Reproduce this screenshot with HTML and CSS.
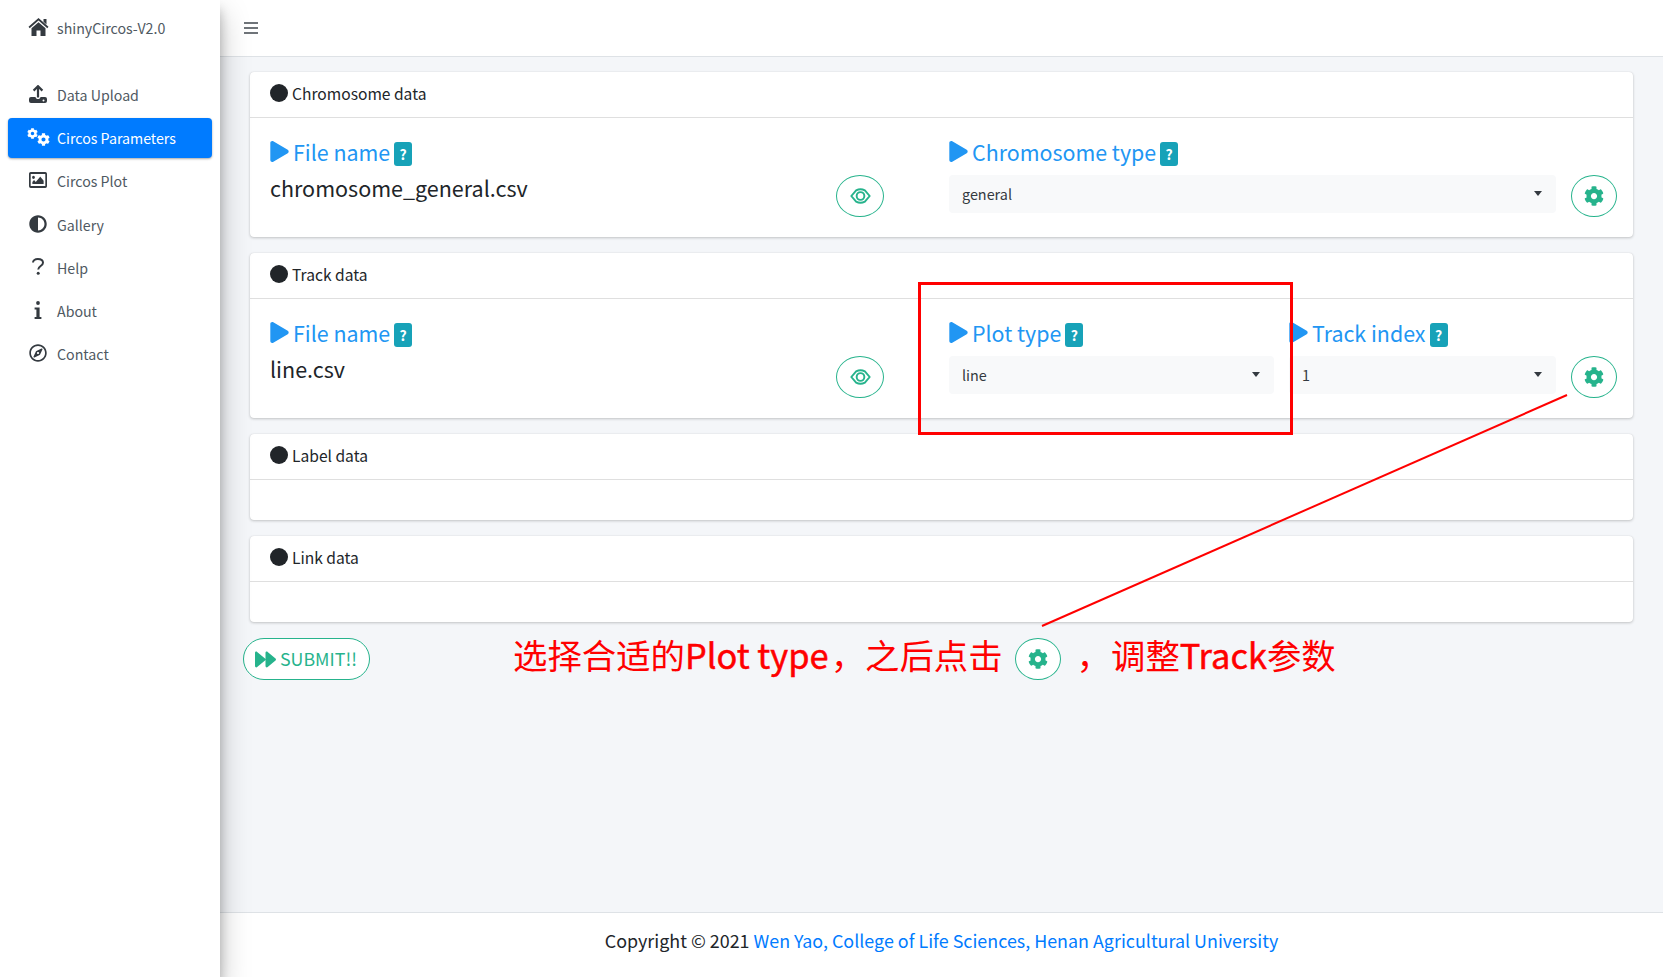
FILE: index.html
```html
<!DOCTYPE html>
<html>
<head>
<meta charset="utf-8">
<title>shinyCircos-V2.0</title>
<link rel="stylesheet" href="styles.css">
</head>
<body>

<!-- shared icons -->
<svg class="defs" aria-hidden="true">
  <symbol id="i-cog" viewBox="0 0 512 512"><path d="M487.4 315.7l-42.6-24.6c4.3-23.2 4.3-47 0-70.2l42.6-24.6c4.9-2.8 7.1-8.6 5.5-14-11.1-35.6-30-67.8-54.7-94.6-3.8-4.1-10-5.1-14.8-2.3L380.8 110c-17.9-15.4-38.5-27.3-60.8-35.1V25.8c0-5.6-3.9-10.5-9.4-11.7-36.7-8.2-74.3-7.8-109.2 0-5.5 1.2-9.4 6.1-9.4 11.7V75c-22.2 7.9-42.8 19.8-60.8 35.1L88.7 85.5c-4.9-2.8-11-1.9-14.8 2.3-24.7 26.7-43.6 58.9-54.7 94.6-1.7 5.4.6 11.2 5.5 14L67.3 221c-4.3 23.2-4.3 47 0 70.2l-42.6 24.6c-4.9 2.8-7.1 8.6-5.5 14 11.1 35.6 30 67.8 54.7 94.6 3.8 4.1 10 5.1 14.8 2.3l42.6-24.6c17.9 15.4 38.5 27.3 60.8 35.1v49.2c0 5.6 3.9 10.5 9.4 11.7 36.7 8.2 74.3 7.8 109.2 0 5.5-1.2 9.4-6.1 9.4-11.7v-49.2c22.2-7.9 42.8-19.8 60.8-35.1l42.6 24.6c4.9 2.8 11 1.9 14.8-2.3 24.7-26.7 43.6-58.9 54.7-94.6 1.5-5.5-.7-11.3-5.6-14.1zM256 336c-44.1 0-80-35.9-80-80s35.9-80 80-80 80 35.9 80 80-35.9 80-80 80z"/></symbol>
  <symbol id="i-play" viewBox="0 0 448 512"><path d="M424.4 214.7L72.4 6.6C43.8-10.3 0 6.1 0 47.9V464c0 37.5 40.7 60.1 72.4 41.3l352-208c31.4-18.5 31.5-64.1 0-82.6z"/></symbol>
  <symbol id="i-eye" viewBox="0 0 24 18"><path d="M1.500 9L7 2.500C10 1 14 1 17 2.500L22.500 9 17 15.500C14 17 10 17 7 15.500z" fill="none" stroke="currentColor" stroke-width="2.200" stroke-linejoin="round"/><circle cx="12" cy="9" r="4.400" fill="none" stroke="currentColor" stroke-width="2.200"/></symbol>
</svg>

<div class="page">
  <aside class="sidebar">
    <a class="brand">
      <span class="nav-icon"><svg width="21" height="18" viewBox="0 0 20 18"><path d="M10 0l10 8.800-1.200 1.400L10 2.600 1.200 10.200 0 8.800z"/><path d="M3 10.300L10 4.200l7 6.100V18h-5v-5.500H8V18H3z"/><path d="M15 1h3v5.400l-3-2.600z"/></svg></span>
      shinyCircos-V2.0
    </a>
    <nav class="nav">
      <a class="nav-link">
        <span class="nav-icon"><svg width="18" height="18" viewBox="0 0 18 18"><path d="M9 12.500V1.500M4.600 5.600L9 1.200l4.400 4.400" fill="none" stroke="currentColor" stroke-width="2.200"/><path d="M2 12h4.500c.3 1.500 1.200 2 2.500 2s2.200-.5 2.500-2H16a2 2 0 0 1 2 2v2a2 2 0 0 1-2 2H2a2 2 0 0 1-2-2v-2a2 2 0 0 1 2-2z"/><circle cx="14.500" cy="15.500" r="1" fill="#fff"/></svg></span>
        Data Upload
      </a>
      <a class="nav-link active">
        <span class="nav-icon"><svg width="23" height="18" viewBox="0 0 23 18"><use href="#i-cog" x="0" y="0" width="11" height="11"/><use href="#i-cog" x="10" y="5" width="13" height="13"/></svg></span>
        Circos Parameters
      </a>
      <a class="nav-link">
        <span class="nav-icon"><svg width="18" height="16" viewBox="0 64 512 384" preserveAspectRatio="none"><path d="M464 64H48C21.490 64 0 85.490 0 112v288c0 26.510 21.490 48 48 48h416c26.510 0 48-21.490 48-48V112c0-26.510-21.490-48-48-48zm-6 336H54a6 6 0 0 1-6-6V118a6 6 0 0 1 6-6h404a6 6 0 0 1 6 6v276a6 6 0 0 1-6 6zM128 152c-22.091 0-40 17.909-40 40s17.909 40 40 40 40-17.909 40-40-17.909-40-40-40zM96 352h320v-80l-87.515-87.515c-4.686-4.686-12.284-4.686-16.971 0L192 304l-39.515-39.515c-4.686-4.686-12.284-4.686-16.971 0L96 304v48z"/></svg></span>
        Circos Plot
      </a>
      <a class="nav-link">
        <span class="nav-icon"><svg width="18" height="18" viewBox="0 0 512 512"><path d="M8 256c0 136.966 111.033 248 248 248s248-111.034 248-248S392.966 8 256 8 8 119.033 8 256zm248 184V72c101.705 0 184 82.311 184 184 0 101.705-82.311 184-184 184z"/></svg></span>
        Gallery
      </a>
      <a class="nav-link">
        <span class="nav-icon"><svg width="12" height="17" viewBox="0 0 12 17"><path d="M1 4.500C1 2.500 3 1 5.800 1 8.800 1 11 2.500 11 4.700c0 3.300-4.800 3.300-4.800 6.800" fill="none" stroke="currentColor" stroke-width="2"/><circle cx="6.200" cy="15.300" r="1.500"/></svg></span>
        Help
      </a>
      <a class="nav-link">
        <span class="nav-icon"><svg width="8" height="18" viewBox="0 0 8 18"><circle cx="4" cy="2" r="1.900"/><path d="M.6 6.500h5V16h1.800v2H.6v-2h1.800V8.500H.6z"/></svg></span>
        About
      </a>
      <a class="nav-link">
        <span class="nav-icon"><svg width="18" height="18" viewBox="0 0 496 512"><path d="M347.94 129.86L203.6 195.83a31.938 31.938 0 0 0-15.77 15.77l-65.97 144.34c-7.61 16.65 9.54 33.81 26.2 26.2l144.34-65.97a31.938 31.938 0 0 0 15.77-15.77l65.97-144.34c7.61-16.66-9.54-33.81-26.2-26.2zm-77.36 148.72c-12.47 12.47-32.69 12.47-45.16 0-12.47-12.47-12.47-32.69 0-45.16 12.47-12.47 32.69-12.47 45.16 0 12.47 12.47 12.47 32.69 0 45.16zM248 8C111.03 8 0 119.03 0 256s111.03 248 248 248 248-111.03 248-248S384.97 8 248 8zm0 448c-110.28 0-200-89.72-200-200S137.72 56 248 56s200 89.72 200 200-89.72 200-200 200z"/></svg></span>
        Contact
      </a>
    </nav>
  </aside>

  <div class="main">
    <header class="topbar">
      <span class="bars"><i></i><i></i><i></i></span>
    </header>

    <div class="content">
      <section class="card">
        <div class="card-header"><span class="dot"></span>Chromosome data</div>
        <div class="card-body">
          <div class="file-col">
            <div class="file-info">
              <div class="label"><svg class="play"><use href="#i-play"/></svg>File name<span class="help">?</span></div>
              <div class="file-name">chromosome_general.csv</div>
            </div>
            <button class="round-btn eye-btn"><svg width="21" height="16"><use href="#i-eye"/></svg></button>
          </div>
          <div class="param-col">
            <div class="field field-grow">
              <div class="label"><svg class="play"><use href="#i-play"/></svg>Chromosome type<span class="help">?</span></div>
              <div class="select">general</div>
            </div>
            <button class="round-btn"><svg width="20" height="20"><use href="#i-cog"/></svg></button>
          </div>
        </div>
      </section>

      <section class="card">
        <div class="card-header"><span class="dot"></span>Track data</div>
        <div class="card-body">
          <div class="file-col">
            <div class="file-info">
              <div class="label"><svg class="play"><use href="#i-play"/></svg>File name<span class="help">?</span></div>
              <div class="file-name">line.csv</div>
            </div>
            <button class="round-btn eye-btn"><svg width="21" height="16"><use href="#i-eye"/></svg></button>
          </div>
          <div class="param-col">
            <div class="field field-plot">
              <div class="label"><svg class="play"><use href="#i-play"/></svg>Plot type<span class="help">?</span></div>
              <div class="select">line</div>
            </div>
            <div class="field field-grow">
              <div class="label"><svg class="play"><use href="#i-play"/></svg>Track index<span class="help">?</span></div>
              <div class="select">1</div>
            </div>
            <button class="round-btn"><svg width="20" height="20"><use href="#i-cog"/></svg></button>
          </div>
        </div>
      </section>

      <section class="card">
        <div class="card-header"><span class="dot"></span>Label data</div>
        <div class="card-empty"></div>
      </section>

      <section class="card">
        <div class="card-header"><span class="dot"></span>Link data</div>
        <div class="card-empty"></div>
      </section>

      <div class="submit-row">
        <button class="submit-btn"><svg width="21" height="21" viewBox="0 0 512 512"><path d="M500.500 231.400l-192-160C287.900 54.300 256 68.600 256 96v320c0 27.400 31.900 41.800 52.500 24.600l192-160c15.300-12.800 15.300-36.400 0-49.200zm-256 0l-192-160C31.900 54.300 0 68.600 0 96v320c0 27.400 31.900 41.800 52.500 24.600l192-160c15.300-12.800 15.300-36.400 0-49.200z"/></svg><span class="submit-text">SUBMIT!!</span></button>
        <div class="note">
          <span>选择合适的</span><span class="note-latin">Plot type</span><span class="note-comma-a">，</span><span>之后点击</span>
          <span class="round-btn note-btn"><svg width="20" height="20"><use href="#i-cog"/></svg></span>
          <span class="note-comma-b">，</span><span>调整</span><span class="note-latin">Track</span><span>参数</span>
        </div>
      </div>
    </div>

    <footer class="footer">
      Copyright © 2021 <a>Wen Yao, College of Life Sciences, Henan Agricultural University</a>
    </footer>
  </div>
</div>

<!-- annotation drawn on top of the app -->
<div class="red-box"></div>
<svg class="red-line" width="1663" height="977"><line x1="1567" y1="395" x2="1042" y2="626"/></svg>

</body>
</html>
```

FILE: styles.css
```css
body, html {
  margin: 0;
  padding: 0;
  height: 100%;
}

body {
  font-family: "Noto Sans CJK SC", "Noto Sans", sans-serif;
  font-size: 14.2px;
  color: #212529;
  overflow: hidden;
}

.defs {
  position: absolute;
  width: 0;
  height: 0;
}

.page {
  display: flex;
  height: 100vh;
}

/* sidebar */
.sidebar {
  position: relative;
  z-index: 2;
  flex: 0 0 220px;
  background: #fff;
  box-shadow: 0 14px 28px rgba(0,0,0,.25), 0 10px 10px rgba(0,0,0,.22);
}

.brand {
  display: flex;
  align-items: center;
  height: 56px;
  padding-left: 24px;
  color: #4f5962;
  line-height: 20px;
}

.nav {
  margin-top: 19px;
  padding: 0 8px;
}

.nav-link {
  display: flex;
  align-items: center;
  height: 40px;
  margin-bottom: 3.2px;
  padding-left: 16px;
  border-radius: 4px;
  color: #4f5962;
  line-height: 20px;
}

.nav-link.active {
  background: #007bff;
  color: #fff;
  box-shadow: 0 1px 3px rgba(0,0,0,.12), 0 1px 2px rgba(0,0,0,.24);
}

.nav-icon {
  display: flex;
  align-items: center;
  justify-content: center;
  width: 28px;
  margin-right: 5px;
  margin-top: -2px;
  color: #343a40;
  fill: #343a40;
}

.active .nav-icon {
  color: #fff;
  fill: #fff;
}

/* main column */
.main {
  flex: 1;
  display: flex;
  flex-direction: column;
  min-width: 0;
}

.topbar {
  flex: 0 0 57px;
  box-sizing: border-box;
  display: flex;
  align-items: center;
  padding-left: 24px;
  background: #fff;
  border-bottom: 1px solid #dee2e6;
}

.bars i {
  display: block;
  width: 14px;
  height: 2px;
  margin: 3px 0;
  background: #6f7479;
}

.content {
  flex: 1;
  padding: 15px 30px 0;
  background: #f4f6f9;
}

.card {
  margin-bottom: 16px;
  background: #fff;
  border-radius: 4px;
  box-shadow: 0 0 1px rgba(0,0,0,.13), 0 1px 3px rgba(0,0,0,.2);
}

.card-header {
  display: flex;
  align-items: center;
  box-sizing: border-box;
  height: 46px;
  padding: 0 0 4px 20px;
  border-bottom: 1px solid #dfdfdf;
  font-size: 15.6px;
  line-height: 22px;
}

.dot {
  width: 18px;
  height: 18px;
  margin-right: 4px;
  border-radius: 50%;
  background: #212529;
}

.card-body {
  display: grid;
  grid-template-columns: 614px 1fr;
  column-gap: 65px;
  height: 119px;
  box-sizing: border-box;
  padding: 21px 16px 20px 20px;
}

.card-empty {
  height: 40px;
}

.file-col, .param-col {
  display: flex;
  align-items: flex-end;
}

.file-info {
  flex: 1;
  align-self: flex-start;
}

.field-grow {
  flex: 1;
}

.field-plot {
  flex: 0 0 325px;
  margin-right: 15px;
}

.field {
  align-self: flex-start;
}

.label {
  display: flex;
  align-items: center;
  box-sizing: border-box;
  height: 36px;
  padding-bottom: 10px;
  color: #2196f3;
  font-size: 21.4px;
  line-height: 28px;
}

.play {
  width: 19px;
  height: 21px;
  margin-right: 4px;
  margin-top: -1px;
  fill: #2196f3;
}

.help {
  width: 18px;
  height: 24px;
  margin: 4px 0 0 4px;
  border-radius: 3px;
  background: #17a2b8;
  color: #fff;
  font-size: 14px;
  font-weight: 700;
  line-height: 24px;
  text-align: center;
}

.file-name {
  font-size: 21.5px;
  line-height: 36px;
  margin-top: -5px;
}

.select {
  position: relative;
  height: 38px;
  padding-left: 13px;
  border-radius: 4px;
  background: #f8f9fa;
  color: #343a40;
  font-size: 14.4px;
  line-height: 38px;
}

.select::after {
  content: "";
  position: absolute;
  right: 14px;
  top: 16px;
  border-left: 4.5px solid transparent;
  border-right: 4.5px solid transparent;
  border-top: 5px solid #343a40;
}

.round-btn {
  display: inline-flex;
  align-items: center;
  justify-content: center;
  box-sizing: border-box;
  width: 46px;
  height: 42px;
  margin-left: 15px;
  padding: 0;
  background: #fff;
  border: 1px solid #26b38c;
  border-radius: 50%;
  color: #26b38c;
  fill: #26b38c;
}

.eye-btn {
  width: 48px;
}

.submit-row {
  display: flex;
  align-items: center;
  height: 42px;
  margin-left: -7px;
}

.submit-btn {
  display: flex;
  align-items: center;
  box-sizing: border-box;
  width: 127px;
  height: 42px;
  padding: 0 0 0 11px;
  background: #fff;
  border: 1px solid #26b38c;
  border-radius: 21px;
  color: #26b38c;
  fill: #26b38c;
  font-family: inherit;
  font-size: 17.8px;
  line-height: 24px;
}

.submit-btn svg {
  margin-right: 4px;
}

.submit-text {
  margin-top: -2px;
}

.note {
  display: flex;
  align-items: center;
  margin: -10px 0 0 143px;
  color: #f00;
  font-size: 34.4px;
  line-height: 42px;
  white-space: nowrap;
}

.note-latin {
  -webkit-text-stroke: .5px #f00;
}

.note-comma-a {
  margin-left: 2px;
}

.note-btn {
  flex: 0 0 46px;
  margin: 10px 0 0 12px;
}

.note-comma-b {
  margin-left: 16px;
}

.footer {
  flex: 0 0 65px;
  box-sizing: border-box;
  background: #fff;
  border-top: 1px solid #dee2e6;
  font-size: 17.9px;
  line-height: 55px;
  text-align: center;
}

.footer a {
  color: #007bff;
}

/* annotation */
.red-box {
  position: absolute;
  left: 918px;
  top: 282px;
  width: 375px;
  height: 153px;
  box-sizing: border-box;
  border: 3px solid #f00;
  z-index: 3;
}

.red-line {
  position: absolute;
  left: 0;
  top: 0;
  z-index: 3;
  pointer-events: none;
}

.red-line line {
  stroke: #f00;
  stroke-width: 2;
}
```
